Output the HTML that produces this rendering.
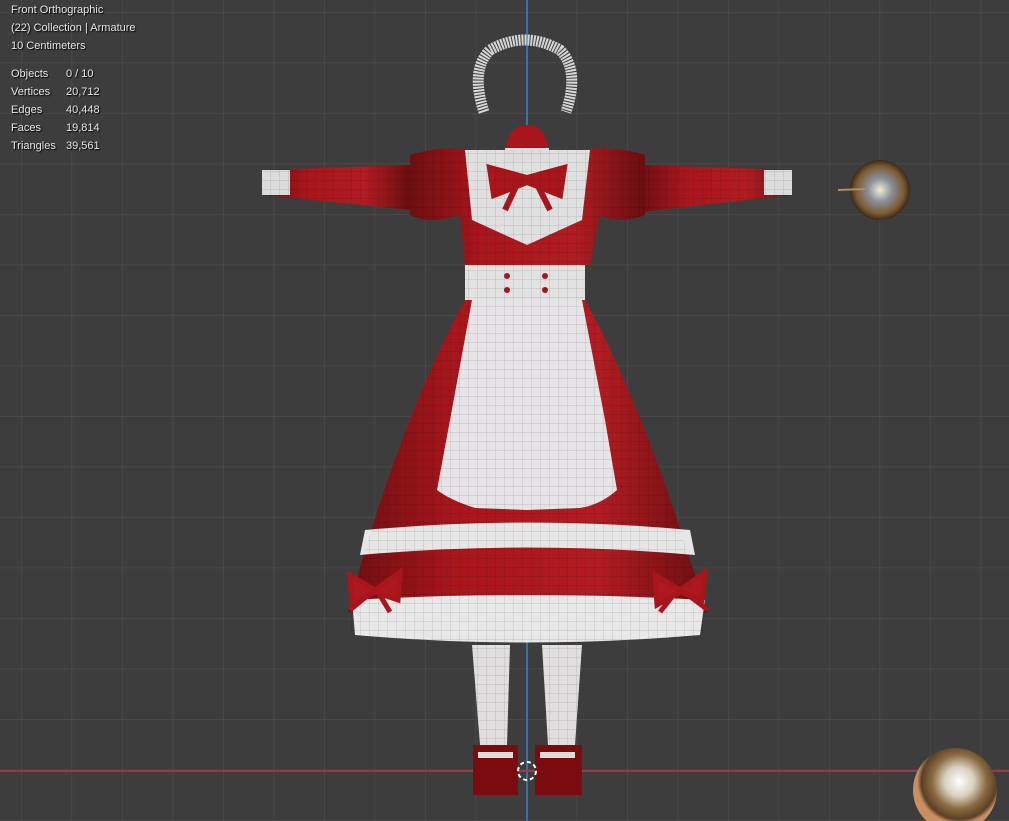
<!DOCTYPE html>
<html><head><meta charset="utf-8"><style>
html,body{margin:0;padding:0;background:#3d3d3d;width:1009px;height:821px;overflow:hidden}
.t{position:absolute;left:11px;font:11px "Liberation Sans",sans-serif;color:#e8e8e8;text-shadow:1px 1px 1px #000;line-height:18px}
.t span{display:inline-block;width:55px}
</style></head><body>
<svg width="1009" height="821" style="position:absolute;left:0;top:0">
<defs>
<pattern id="g" x="21" y="12" width="50.5" height="50.5" patternUnits="userSpaceOnUse">
<path d="M0 0V50.5M0 0H50.5" stroke="#4d4d4d" stroke-width="1.3" fill="none"/></pattern>
<pattern id="m" width="9" height="9" patternUnits="userSpaceOnUse"><path d="M0 0V9M0 0H9" stroke="rgba(0,0,0,.22)" stroke-width=".7" fill="none"/></pattern>
<linearGradient id="r" x1="0" x2="1"><stop offset="0" stop-color="#6e0f12"/><stop offset=".3" stop-color="#a8161c"/><stop offset=".7" stop-color="#b01c22"/><stop offset="1" stop-color="#6a0e10"/></linearGradient>
<radialGradient id="o1"><stop offset="0" stop-color="#f0ecd8"/><stop offset=".4" stop-color="#8a8f9a"/><stop offset=".8" stop-color="#7a5a30"/><stop offset="1" stop-color="#3a2a18"/></radialGradient>
<radialGradient id="o2" cx=".55" cy=".4"><stop offset="0" stop-color="#ffffff"/><stop offset=".35" stop-color="#d8d0c0"/><stop offset=".65" stop-color="#8a6a40"/><stop offset=".9" stop-color="#5a4028"/><stop offset="1" stop-color="#c89060"/></radialGradient>
<clipPath id="fig">
<path d="M262 170 L410 165 L410 210 L262 195Z"/>
<path d="M640 165 L792 170 L792 195 L640 212Z"/>
<path d="M410 155 Q440 145 470 150 L580 150 Q615 145 645 155 L645 215 Q620 225 600 215 L590 265 L465 265 L460 215 Q430 225 410 215Z"/>
<rect x="465" y="265" width="120" height="35"/>
<path d="M465 300 L585 300 Q640 400 690 560 L708 612 L705 635 Q527 650 352 635 L348 612 L362 560 Q410 400 465 300Z"/>
<path d="M472 645 L510 645 L507 745 L480 745Z"/>
<path d="M542 645 L582 645 L575 745 L548 745Z"/>
</clipPath>
</defs>
<rect width="1009" height="821" fill="#3d3d3d"/>
<rect width="1009" height="821" fill="url(#g)"/>
<line x1="527" y1="0" x2="527" y2="821" stroke="#3f6fa8" stroke-width="2"/>
<line x1="0" y1="771" x2="1009" y2="771" stroke="#9a3a44" stroke-width="2"/>
<!-- headband -->
<path d="M484 112 Q470 70 490 50 Q525 30 560 50 Q580 70 566 112" fill="none" stroke="#d6d6d6" stroke-width="11" stroke-dasharray="2 1"/>
<!-- arms -->
<path d="M262 170 L410 165 L410 210 L262 195Z" fill="url(#r)"/>
<rect x="262" y="170" width="28" height="25" fill="#dcdcdc"/>
<path d="M640 165 L792 170 L792 195 L640 212Z" fill="url(#r)"/>
<rect x="764" y="170" width="28" height="25" fill="#dcdcdc"/>
<!-- torso -->
<path d="M410 155 Q440 145 470 150 L580 150 Q615 145 645 155 L645 215 Q620 225 600 215 L590 265 L465 265 L460 215 Q430 225 410 215Z" fill="url(#r)"/>
<path d="M465 150 L590 150 L582 220 L527 245 L472 220Z" fill="#e0e0e0"/>
<path d="M505 160 Q505 125 527 125 Q549 125 549 160Z" fill="#a8161c"/>
<rect x="505" y="148" width="44" height="14" fill="#ddd"/>
<path d="M490 168 L527 178 L564 168 L560 195 L527 182 L494 195Z M520 178 L505 210 M534 178 L550 210" fill="#a8161c" stroke="#a8161c" stroke-width="6"/>
<!-- skirt -->
<path d="M465 300 L585 300 Q640 400 690 560 L708 612 L348 612 L362 560 Q410 400 465 300Z" fill="url(#r)"/>
<path d="M365 530 Q527 515 690 530 L695 555 Q527 540 360 555Z" fill="#e6e6e6"/>
<path d="M352 600 Q527 590 705 600 L700 635 Q527 650 355 635Z" fill="#e8e8e8"/>
<!-- waist -->
<rect x="465" y="265" width="120" height="35" fill="#e2e2e2"/>
<circle cx="507" cy="276" r="3" fill="#a8161c"/><circle cx="507" cy="290" r="3" fill="#a8161c"/>
<circle cx="545" cy="276" r="3" fill="#a8161c"/><circle cx="545" cy="290" r="3" fill="#a8161c"/>
<!-- apron -->
<path d="M472 300 L582 300 L605 420 L617 490 Q600 505 580 508 L527 510 L475 508 Q450 500 437 490 L450 420Z" fill="#e6e4e6"/>
<!-- legs -->
<path d="M472 645 L510 645 L507 745 L480 745Z" fill="#e0dede"/>
<path d="M542 645 L582 645 L575 745 L548 745Z" fill="#e0dede"/>
<rect x="262" y="125" width="530" height="620" fill="url(#m)" clip-path="url(#fig)"/>
<!-- bows -->
<path d="M350 575 L375 590 L400 572 L398 600 L375 592 L352 605Z M372 592 L350 610 M378 592 L390 612" fill="#b01820" stroke="#a8161c" stroke-width="5"/>
<path d="M655 575 L680 590 L705 572 L702 600 L680 592 L657 605Z M676 592 L660 612 M684 592 L708 610" fill="#b01820" stroke="#a8161c" stroke-width="5"/>
<path d="M473 745 L518 745 L518 795 L473 795Z" fill="#7a0c10"/>
<path d="M535 745 L582 745 L582 795 L535 795Z" fill="#7a0c10"/>
<rect x="478" y="752" width="35" height="6" fill="#ddd"/><rect x="540" y="752" width="35" height="6" fill="#ddd"/>
<circle cx="527" cy="771" r="9" fill="none" stroke="#fff" stroke-width="2" stroke-dasharray="4 3"/>
<!-- orbs -->
<circle cx="880" cy="190" r="30" fill="url(#o1)"/>
<line x1="838" y1="190" x2="865" y2="189" stroke="#b09060" stroke-width="2"/>
<circle cx="955" cy="790" r="42" fill="url(#o2)"/>
</svg>
<div class="t" style="top:1px">Front Orthographic<br>(22) Collection | Armature<br>10 Centimeters</div>
<div class="t" style="top:65px"><span>Objects</span>0 / 10<br><span>Vertices</span>20,712<br><span>Edges</span>40,448<br><span>Faces</span>19,814<br><span>Triangles</span>39,561</div>
</body></html>
